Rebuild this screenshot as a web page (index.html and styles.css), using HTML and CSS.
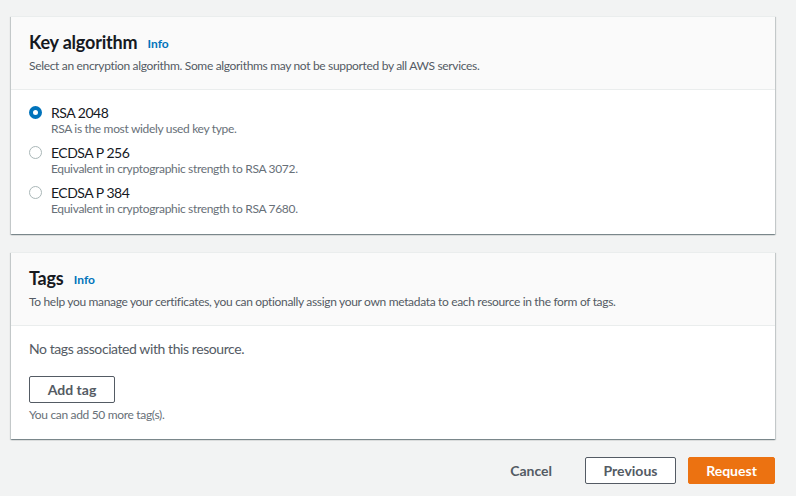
FILE: index.html
```html
<!DOCTYPE html>
<html>
<head>
<meta charset="utf-8">
<link rel="stylesheet" href="styles.css">
</head>
<body>
<div class="page">
  <section class="card">
    <header class="card-head">
      <h2 class="title">Key algorithm <span class="info">Info</span></h2>
      <p class="sub">Select an encryption algorithm. Some algorithms may not be supported by all AWS services.</p>
    </header>
    <div class="card-body radios">
      <div class="radio-row">
        <span class="radio checked"></span>
        <div class="radio-text">
          <div class="label">RSA 2048</div>
          <div class="desc">RSA is the most widely used key type.</div>
        </div>
      </div>
      <div class="radio-row">
        <span class="radio"></span>
        <div class="radio-text">
          <div class="label">ECDSA P 256</div>
          <div class="desc">Equivalent in cryptographic strength to RSA 3072.</div>
        </div>
      </div>
      <div class="radio-row">
        <span class="radio"></span>
        <div class="radio-text">
          <div class="label">ECDSA P 384</div>
          <div class="desc">Equivalent in cryptographic strength to RSA 7680.</div>
        </div>
      </div>
    </div>
  </section>

  <section class="card">
    <header class="card-head">
      <h2 class="title">Tags <span class="info">Info</span></h2>
      <p class="sub">To help you manage your certificates, you can optionally assign your own metadata to each resource in the form of tags.</p>
    </header>
    <div class="card-body tags">
      <p class="empty">No tags associated with this resource.</p>
      <button class="btn btn-normal add">Add tag</button>
      <p class="desc hint">You can add 50 more tag(s).</p>
    </div>
  </section>

  <div class="actions">
    <button class="btn btn-link">Cancel</button>
    <button class="btn btn-normal prev">Previous</button>
    <button class="btn btn-primary">Request</button>
  </div>
</div>
</body>
</html>
```

FILE: styles.css
```css
* { box-sizing: border-box; }
html, body {
  margin: 0;
  padding: 0;
  background: #f2f3f3;
  font-family: Lato, Roboto, "Liberation Sans", Arial, sans-serif;
  color: #16191f;
}
.page {
  padding: 16px 21px 0 11px;
  display: flex;
  flex-direction: column;
  gap: 18px;
}
.card {
  background: #fff;
  border-top: 1px solid #eaeded;
  box-shadow: 0 1px 1px 0 rgba(0, 28, 36, 0.3), 1px 1px 1px 0 rgba(0, 28, 36, 0.15), -1px 1px 1px 0 rgba(0, 28, 36, 0.15);
}
.card-head {
  background: #fafafa;
  border-bottom: 1px solid #eaeded;
  padding: 14px 18px 15px;
}
.title {
  margin: 0;
  font-size: 18px;
  line-height: 22px;
  font-weight: 700;
  color: #16191f;
  letter-spacing: -0.2px;
}
.info {
  font-size: 12px;
  font-weight: 700;
  color: #0073bb;
  margin-left: 6px;
  vertical-align: 1px;
  letter-spacing: 0;
}
.sub {
  margin: 3px 0 0;
  font-size: 12px;
  line-height: 16px;
  color: #545b64;
  letter-spacing: -0.33px;
}
.card-body {
  padding: 15px 18px 17px;
}
.radios {
  display: flex;
  flex-direction: column;
  gap: 8px;
}
.radio-row {
  display: flex;
  align-items: flex-start;
  gap: 9px;
}
.radio {
  width: 13px;
  height: 13px;
  border-radius: 50%;
  border: 1px solid #aab7b8;
  margin-top: 1px;
  flex: none;
}
.radio.checked {
  border: 4px solid #0073bb;
}
.label {
  font-size: 14px;
  line-height: 16px;
  letter-spacing: -0.5px;
}
.desc {
  font-size: 12px;
  line-height: 16px;
  color: #687078;
  letter-spacing: -0.33px;
}
.tags {
  padding: 13px 18px 16px;
}
.empty {
  margin: 0;
  font-size: 14px;
  line-height: 20px;
  color: #545b64;
  letter-spacing: -0.42px;
}
.hint { margin: 4px 0 0; }
.btn {
  font-family: inherit;
  font-size: 14px;
  font-weight: 700;
  line-height: 20px;
  border-radius: 2px;
  white-space: nowrap;
  cursor: pointer;
}
.btn-normal {
  background: #fff;
  color: #545b64;
  border: 1px solid #545b64;
  height: 27px;
  padding: 0;
}
.add {
  margin-top: 17px;
  width: 86px;
}
.actions {
  display: flex;
  justify-content: flex-end;
  align-items: center;
  gap: 12px;
}
.btn-link {
  background: none;
  border: 1px solid transparent;
  color: #545b64;
  height: 27px;
  padding: 0 20px 0 24px;
}
.prev { width: 91px; }
.btn-primary {
  background: #ec7211;
  border: 1px solid #ec7211;
  color: #fff;
  height: 27px;
  width: 87px;
  padding: 0;
}
```
